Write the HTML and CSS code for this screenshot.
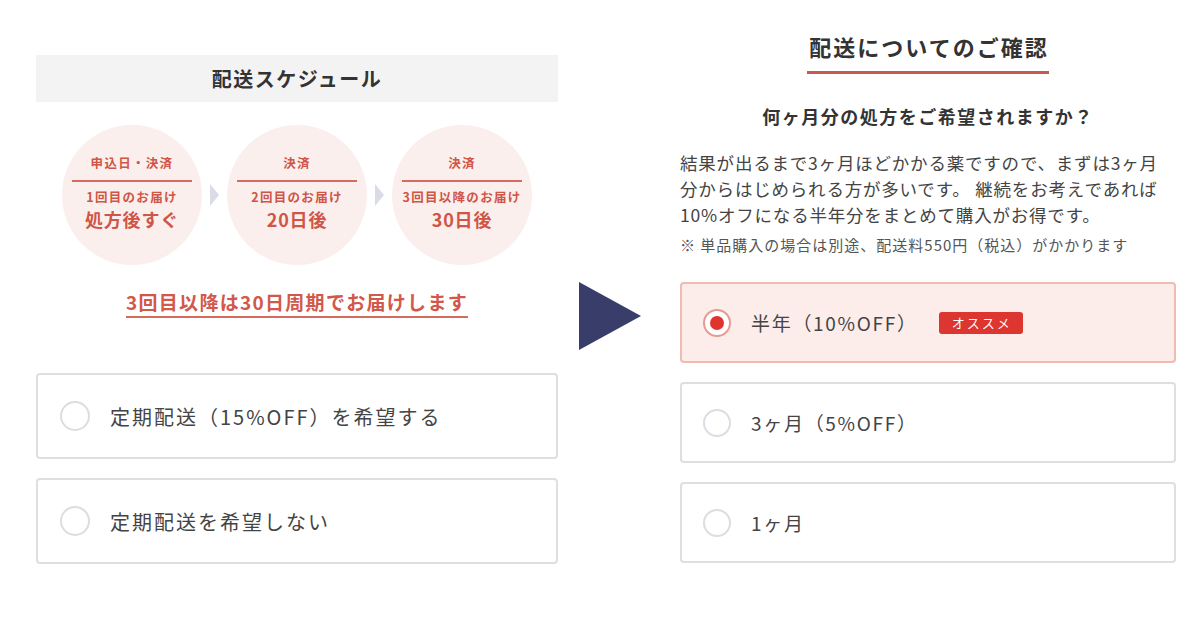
FILE: index.html
```html
<!DOCTYPE html>
<html lang="ja">
<head>
  <meta charset="UTF-8" />
  <meta name="viewport" content="width=device-width, initial-scale=1.0" />
  <title>配送スケジュール</title>
  <link rel="stylesheet" href="styles.css">
</head>
<body>

<div class="page">
  <section class="schedule">
    <h2 class="schedule-title">配送スケジュール</h2>

    <div class="steps">
      <div class="step">
        <div class="step-top">申込日・決済</div>
        <div class="step-sub">1回目のお届け</div>
        <div class="step-main">処方後すぐ</div>
      </div>
      <span class="chev"></span>
      <div class="step">
        <div class="step-top">決済</div>
        <div class="step-sub">2回目のお届け</div>
        <div class="step-main">20日後</div>
      </div>
      <span class="chev"></span>
      <div class="step">
        <div class="step-top">決済</div>
        <div class="step-sub">3回目以降のお届け</div>
        <div class="step-main">30日後</div>
      </div>
    </div>

    <p class="cycle"><span>3回目以降は30日周期でお届けします</span></p>

    <div class="options">
      <label class="option">
        <span class="radio"></span>
        <span class="option-text">定期配送（15%OFF）を希望する</span>
      </label>
      <label class="option">
        <span class="radio"></span>
        <span class="option-text">定期配送を希望しない</span>
      </label>
    </div>
  </section>

  <div class="arrow">
    <svg width="62" height="68" viewBox="0 0 62 68"><polygon points="0,0 62,34 0,68" fill="#383d6a"/></svg>
  </div>

  <section class="confirm">
    <h2 class="confirm-title"><span>配送についてのご確認</span></h2>
    <h3 class="question">何ヶ月分の処方をご希望されますか？</h3>
    <p class="lead">結果が出るまで3ヶ月ほどかかる薬ですので、まずは3ヶ月<br>分からはじめられる方が多いです。 継続をお考えであれば<br>10%オフになる半年分をまとめて購入がお得です。</p>
    <p class="note">※ 単品購入の場合は別途、配送料550円（税込）がかかります</p>

    <div class="options options-sm">
      <label class="option selected">
        <span class="radio"></span>
        <span class="option-text">半年（10%OFF）</span>
        <span class="badge">オススメ</span>
      </label>
      <label class="option">
        <span class="radio"></span>
        <span class="option-text">3ヶ月（5%OFF）</span>
      </label>
      <label class="option">
        <span class="radio"></span>
        <span class="option-text">1ヶ月</span>
      </label>
    </div>
  </section>
</div>

</body>
</html>
```

FILE: styles.css
```css
body {
  margin: 0;
  font-family: 'Noto Sans CJK JP', 'Noto Sans', sans-serif;
  background: #fff;
  color: #3a3a3a;
}
.page {
  width: 1200px;
  height: 630px;
  display: flex;
  box-sizing: border-box;
  padding: 0 24px 0 36px;
}

/* left */
.schedule {
  width: 522px;
  padding-top: 55px;
}
.schedule-title {
  margin: 0;
  height: 47px;
  line-height: 47px;
  background: #f3f3f4;
  text-align: center;
  font-size: 20px;
  font-weight: 700;
  color: #333;
  letter-spacing: 1.5px;
}
.steps {
  margin-top: 23px;
  display: flex;
  justify-content: center;
  align-items: center;
}
.step {
  width: 140px;
  height: 140px;
  border-radius: 50%;
  background: #fbefee;
  color: #cf5546;
  font-weight: 700;
  text-align: center;
  display: flex;
  flex-direction: column;
  align-items: center;
  padding-top: 28px;
  box-sizing: border-box;
  letter-spacing: 1.3px;
}
.step-top {
  font-size: 12.5px;
  line-height: 20px;
  width: 120px;
  padding-bottom: 7px;
  border-bottom: 2px solid #d56a5e;
}
.step-sub {
  margin-top: 6px;
  font-size: 12.5px;
  line-height: 18px;
}
.step-main {
  font-size: 18px;
  line-height: 26px;
  letter-spacing: .8px;
}
.chev {
  width: 0;
  height: 0;
  margin: 0 8px;
  border-top: 11px solid transparent;
  border-bottom: 11px solid transparent;
  border-left: 9px solid #d9dce6;
}
.cycle {
  margin: 24px 0 0;
  display: flex;
  justify-content: center;
  font-size: 19px;
  font-weight: 700;
  color: #d1584a;
  line-height: 26px;
  letter-spacing: 1.3px;
}
.cycle span {
  padding-bottom: 1px;
  border-bottom: 2px solid #d56a5e;
}
.options {
  margin-top: 55px;
  display: flex;
  flex-direction: column;
  gap: 19px;
}
.option {
  height: 86px;
  box-sizing: border-box;
  border: 2px solid #dedee3;
  border-radius: 4px;
  display: flex;
  align-items: center;
  padding-left: 22px;
  background: #fff;
}
.radio {
  width: 30px;
  height: 30px;
  box-sizing: border-box;
  border: 2px solid #dcdce2;
  border-radius: 50%;
  background: #fff;
  flex-shrink: 0;
}
.option-text {
  margin-left: 20px;
  font-size: 20px;
  color: #444;
  letter-spacing: 2px;
}

/* arrow */
.arrow {
  width: 122px;
  padding-top: 282px;
  display: flex;
  justify-content: center;
  align-items: flex-start;
}
.arrow svg {
  margin-left: -18px;
  display: block;
}

/* right */
.confirm {
  width: 496px;
  padding-top: 30px;
}
.confirm-title {
  margin: 0;
  display: flex;
  justify-content: center;
  font-size: 22px;
  line-height: 32px;
  font-weight: 700;
  color: #333;
  letter-spacing: 2px;
}
.confirm-title span {
  padding: 0 0 9px 2px;
  border-bottom: 3px solid #c55a50;
}
.question {
  margin: 29px 0 0;
  text-align: center;
  font-size: 18px;
  line-height: 26px;
  font-weight: 700;
  color: #333;
  letter-spacing: 1.5px;
}
.lead {
  margin: 21px 0 0;
  font-size: 17.5px;
  line-height: 26px;
  letter-spacing: .8px;
  white-space: nowrap;
  color: #444;
}
.note {
  margin: 7px 0 0;
  font-size: 15px;
  line-height: 20px;
  letter-spacing: 1px;
  white-space: nowrap;
  color: #555;
}
.options-sm {
  margin-top: 27px;
}
.options-sm .option {
  height: 81px;
  padding-left: 21px;
}
.options-sm .radio {
  width: 28px;
  height: 28px;
}
.options-sm .option-text {
  margin-left: 20px;
  font-size: 19px;
  letter-spacing: 1.7px;
}
.option.selected {
  background: #fcedeb;
  border-color: #f1bab3;
}
.option.selected .radio {
  border-color: #e79a92;
  display: flex;
  align-items: center;
  justify-content: center;
}
.option.selected .radio::after {
  content: "";
  width: 14px;
  height: 14px;
  border-radius: 50%;
  background: #e0352d;
}
.badge {
  margin-left: 21px;
  background: #dd3530;
  color: #fff;
  font-size: 13px;
  line-height: 22px;
  padding: 0 11px 0 13px;
  border-radius: 3px;
  letter-spacing: 2px;
}
```
